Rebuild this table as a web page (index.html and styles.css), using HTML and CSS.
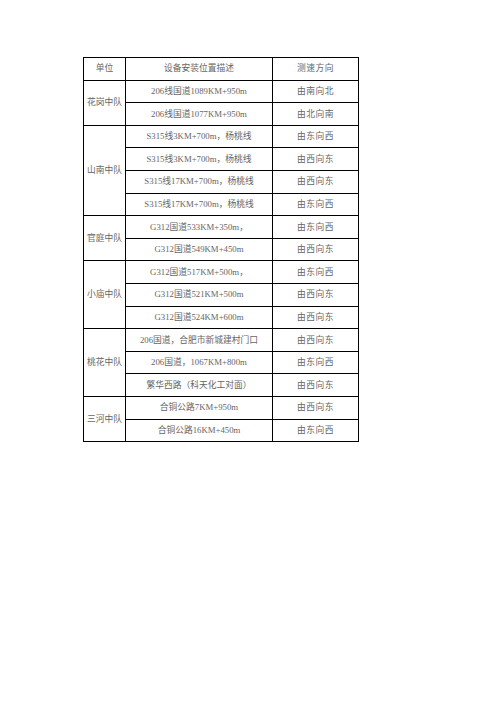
FILE: index.html
```html
<!DOCTYPE html>
<html lang="zh">
<head>
<meta charset="utf-8">
<title>测速设备安装位置</title>
<link rel="stylesheet" href="styles.css">
</head>
<body>
<table class="sheet">
  <colgroup>
    <col class="c-unit">
    <col class="c-loc">
    <col class="c-dir">
  </colgroup>
  <thead>
    <tr><th>单位</th><th>设备安装位置描述</th><th class="dir">测速方向</th></tr>
  </thead>
  <tbody>
    <tr><td rowspan="2">花岗中队</td><td>206线国道1089KM+950m</td><td class="dir">由南向北</td></tr>
    <tr><td>206线国道1077KM+950m</td><td class="dir">由北向南</td></tr>
    <tr><td rowspan="4">山南中队</td><td>S315线3KM+700m，杨桃线</td><td class="dir">由东向西</td></tr>
    <tr><td>S315线3KM+700m，杨桃线</td><td class="dir">由西向东</td></tr>
    <tr><td>S315线17KM+700m，杨桃线</td><td class="dir">由西向东</td></tr>
    <tr><td>S315线17KM+700m，杨桃线</td><td class="dir">由东向西</td></tr>
    <tr><td rowspan="2">官庭中队</td><td>G312国道533KM+350m，</td><td class="dir">由东向西</td></tr>
    <tr><td>G312国道549KM+450m</td><td class="dir">由西向东</td></tr>
    <tr><td rowspan="3">小庙中队</td><td>G312国道517KM+500m，</td><td class="dir">由东向西</td></tr>
    <tr><td>G312国道521KM+500m</td><td class="dir">由西向东</td></tr>
    <tr><td>G312国道524KM+600m</td><td class="dir">由西向东</td></tr>
    <tr><td rowspan="3">桃花中队</td><td>206国道，合肥市新城建村门口</td><td class="dir">由西向东</td></tr>
    <tr><td>206国道，1067KM+800m</td><td class="dir">由东向西</td></tr>
    <tr><td>繁华西路（科天化工对面）</td><td class="dir">由西向东</td></tr>
    <tr><td rowspan="2">三河中队</td><td>合铜公路7KM+950m</td><td class="dir">由西向东</td></tr>
    <tr><td>合铜公路16KM+450m</td><td class="dir">由东向西</td></tr>
  </tbody>
</table>
</body>
</html>
```

FILE: styles.css
```css
html, body {
  margin: 0;
  padding: 0;
  background: #fff;
}

.sheet {
  border-collapse: collapse;
  table-layout: fixed;
  width: 276px;
  margin: 57px 0 0 83px;
  font-family: "Liberation Serif", "Noto Sans CJK SC", serif;
  font-size: 8.75px;
  color: #666;
}

.c-unit { width: 42px; }
.c-loc { width: 147px; }
.c-dir { width: 86px; }

.sheet th,
.sheet td {
  border: 1px solid #000;
  padding: 0;
  height: 21.6px;
  text-align: center;
  vertical-align: middle;
  font-weight: normal;
  white-space: nowrap;
  line-height: 1;
}

.sheet .dir {
  letter-spacing: 0.5px;
}
```
